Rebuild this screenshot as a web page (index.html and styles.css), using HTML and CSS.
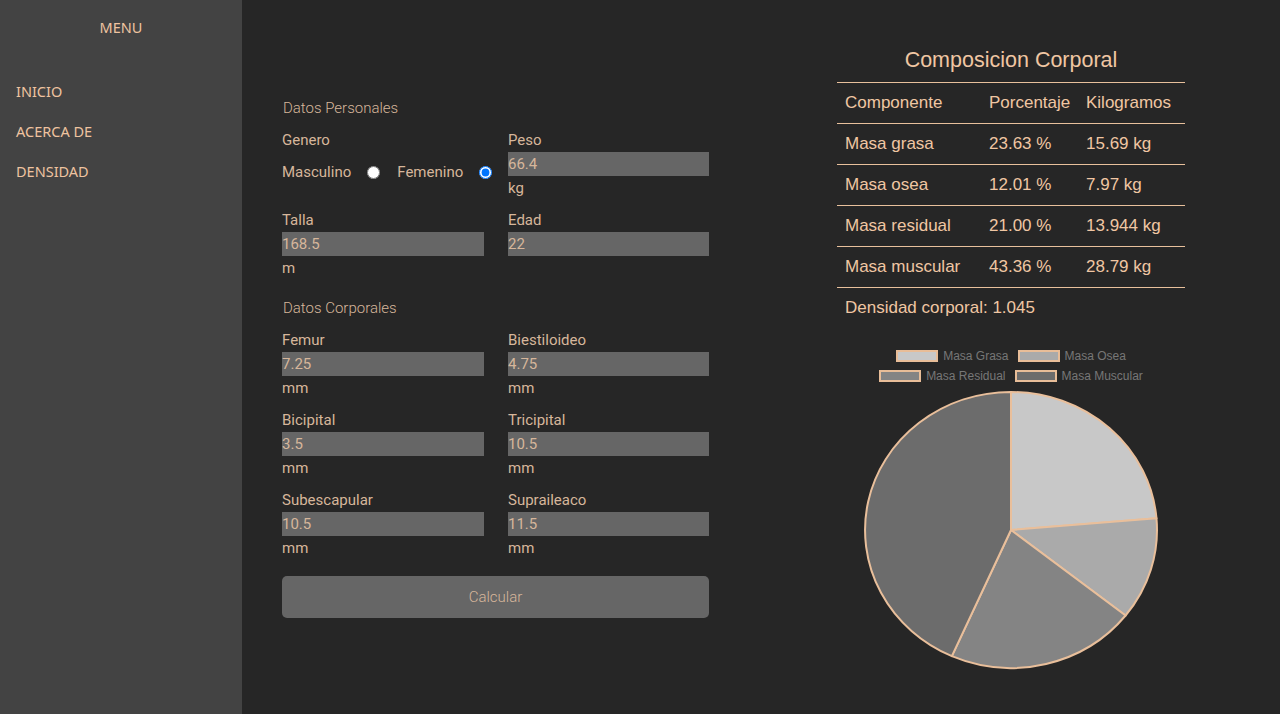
FILE: index.html
```html
<!DOCTYPE html>
<html lang="es">
<head>
<meta charset="utf-8">
<title>Composicion Corporal</title>
<link rel="stylesheet" href="styles.css">
</head>
<body>
<div class="app">
  <aside class="sidebar">
    <div class="menu-title">MENU</div>
    <nav class="menu">
      <a class="menu-item">INICIO</a>
      <a class="menu-item">ACERCA DE</a>
      <a class="menu-item">DENSIDAD</a>
    </nav>
  </aside>
  <main class="main">
    <section class="form">
      <div class="section-title">Datos Personales</div>
      <div class="grid">
        <div class="field">
          <div class="label">Genero</div>
          <div class="radios">
            <label class="radio-label">Masculino</label><input type="radio" name="g" class="radio">
            <label class="radio-label second">Femenino</label><input type="radio" name="g" class="radio" checked>
          </div>
        </div>
        <div class="field">
          <div class="label">Peso</div>
          <input class="input" value="66.4">
          <div class="unit">kg</div>
        </div>
        <div class="field">
          <div class="label">Talla</div>
          <input class="input" value="168.5">
          <div class="unit">m</div>
        </div>
        <div class="field">
          <div class="label">Edad</div>
          <input class="input" value="22">
        </div>
      </div>
      <div class="section-title second-title">Datos Corporales</div>
      <div class="grid">
        <div class="field"><div class="label">Femur</div><input class="input" value="7.25"><div class="unit">mm</div></div>
        <div class="field"><div class="label">Biestiloideo</div><input class="input" value="4.75"><div class="unit">mm</div></div>
        <div class="field"><div class="label">Bicipital</div><input class="input" value="3.5"><div class="unit">mm</div></div>
        <div class="field"><div class="label">Tricipital</div><input class="input" value="10.5"><div class="unit">mm</div></div>
        <div class="field"><div class="label">Subescapular</div><input class="input" value="10.5"><div class="unit">mm</div></div>
        <div class="field"><div class="label">Supraileaco</div><input class="input" value="11.5"><div class="unit">mm</div></div>
      </div>
      <button class="button">Calcular</button>
    </section>
    <section class="results">
      <h2 class="results-title">Composicion Corporal</h2>
      <table class="table">
        <colgroup><col class="c1"><col class="c2"><col class="c3"></colgroup>
        <tr><td>Componente</td><td>Porcentaje</td><td>Kilogramos</td></tr>
        <tr><td>Masa grasa</td><td>23.63 %</td><td>15.69 kg</td></tr>
        <tr><td>Masa osea</td><td>12.01 %</td><td>7.97 kg</td></tr>
        <tr><td>Masa residual</td><td>21.00 %</td><td>13.944 kg</td></tr>
        <tr><td>Masa muscular</td><td>43.36 %</td><td>28.79 kg</td></tr>
      </table>
      <div class="density">Densidad corporal: 1.045</div>
      <div class="legend">
        <div class="legend-row">
          <span class="legend-item"><span class="swatch s1"></span>Masa Grasa</span>
          <span class="legend-item"><span class="swatch s2"></span>Masa Osea</span>
        </div>
        <div class="legend-row">
          <span class="legend-item"><span class="swatch s3"></span>Masa Residual</span>
          <span class="legend-item"><span class="swatch s4"></span>Masa Muscular</span>
        </div>
      </div>
      <svg class="pie" width="300" height="280" viewBox="0 0 300 280">
        <g stroke="#e9bf9b" stroke-width="2" stroke-linejoin="round">
          <path fill="#c8c8c8" d="M150,140 L150,2 A146,138 0 0 1 295.46,128.15 Z"/>
          <path fill="#aaaaaa" d="M150,140 L295.46,128.15 A146,138 0 0 1 264.58,225.5 Z"/>
          <path fill="#848484" d="M150,140 L264.58,225.5 A146,138 0 0 1 90.86,266.15 Z"/>
          <path fill="#6c6c6c" d="M150,140 L90.86,266.15 A146,138 0 0 1 150,2 Z"/>
        </g>
      </svg>
    </section>
  </main>
</div>
</body>
</html>
```

FILE: styles.css
```css
* { box-sizing: border-box; }
html, body { margin: 0; padding: 0; height: 100%; }
body {
  background: #262626;
  font-family: Roboto, "Liberation Sans", sans-serif;
  overflow: hidden;
}
.app { display: flex; height: 714px; }
.sidebar {
  width: 242px;
  flex: none;
  background: #434343;
  color: #efc3a0;
  font-family: "Noto Sans", "Open Sans", sans-serif;
  font-size: 14.5px;
}
.menu-title {
  text-align: center;
  line-height: 20px;
  padding-top: 17px;
}
.menu { display: flex; flex-direction: column; padding-top: 34px; }
.menu-item {
  display: block;
  padding-left: 16px;
  line-height: 40px;
}
.main {
  flex: 1;
  display: flex;
  align-items: flex-start;
  padding: 44px 0 0 40px;
}
.form {
  width: 427px;
  margin-top: 52px;
  color: #d6b69b;
  font-size: 15px;
}
.section-title {
  font-size: 15px;
  font-weight: 300;
  line-height: 24px;
  padding-left: 1px;
  margin-bottom: 8px;
}
.second-title { margin-top: 16px; }
.grid {
  display: grid;
  grid-template-columns: 202px 201px;
  column-gap: 24px;
  row-gap: 8px;
}
.label, .unit { line-height: 24px; }
.input {
  display: block;
  width: 100%;
  height: 24px;
  border: none;
  margin: 0;
  padding: 0;
  background: #666666;
  color: #d6b69b;
  font-family: inherit;
  font-size: 15px;
  outline: none;
}
.radios {
  display: flex;
  align-items: center;
  height: 24px;
  margin-top: 8px;
}
.radio-label { line-height: 24px; }
.radio-label.second { margin-left: 17px; }
.radio {
  width: 13px;
  height: 13px;
  margin: 0 0 0 16px;
}
.button {
  display: block;
  width: 427px;
  height: 42px;
  margin-top: 16px;
  border: none;
  border-radius: 5px;
  background: #666666;
  color: #d6b69b;
  font-family: inherit;
  font-size: 15px;
  font-weight: 300;
}
.results {
  width: 348px;
  margin-left: 128px;
  color: #f0c6a3;
  font-family: "Liberation Sans", Arial, sans-serif;
}
.results-title {
  margin: 1px 0 7px;
  font-size: 21.5px;
  font-weight: normal;
  line-height: 30px;
  text-align: center;
}
.table {
  width: 348px;
  border-collapse: collapse;
  table-layout: fixed;
  font-size: 17px;
}
.c1 { width: 144px; }
.c2 { width: 97px; }
.c3 { width: 107px; }
.table tr { border-top: 1px solid #e8c09c; border-bottom: 1px solid #e8c09c; }
.table td {
  height: 41px;
  padding: 0 0 0 8px;
  white-space: nowrap;
}
.density {
  font-size: 17px;
  line-height: 40px;
  padding-left: 8px;
}
.legend {
  margin-top: 18px;
  font-size: 12px;
  color: #777777;
}
.legend-row {
  display: flex;
  justify-content: center;
  gap: 9px;
  line-height: 20px;
}
.legend-item { display: flex; align-items: center; }
.swatch {
  width: 42px;
  height: 12px;
  border: 2px solid #e8bd98;
  margin-right: 5px;
}
.s1 { background: #c8c8c8; }
.s2 { background: #aaaaaa; }
.s3 { background: #848484; }
.s4 { background: #6c6c6c; }
.pie {
  display: block;
  margin: 4px auto 0;
}
```
